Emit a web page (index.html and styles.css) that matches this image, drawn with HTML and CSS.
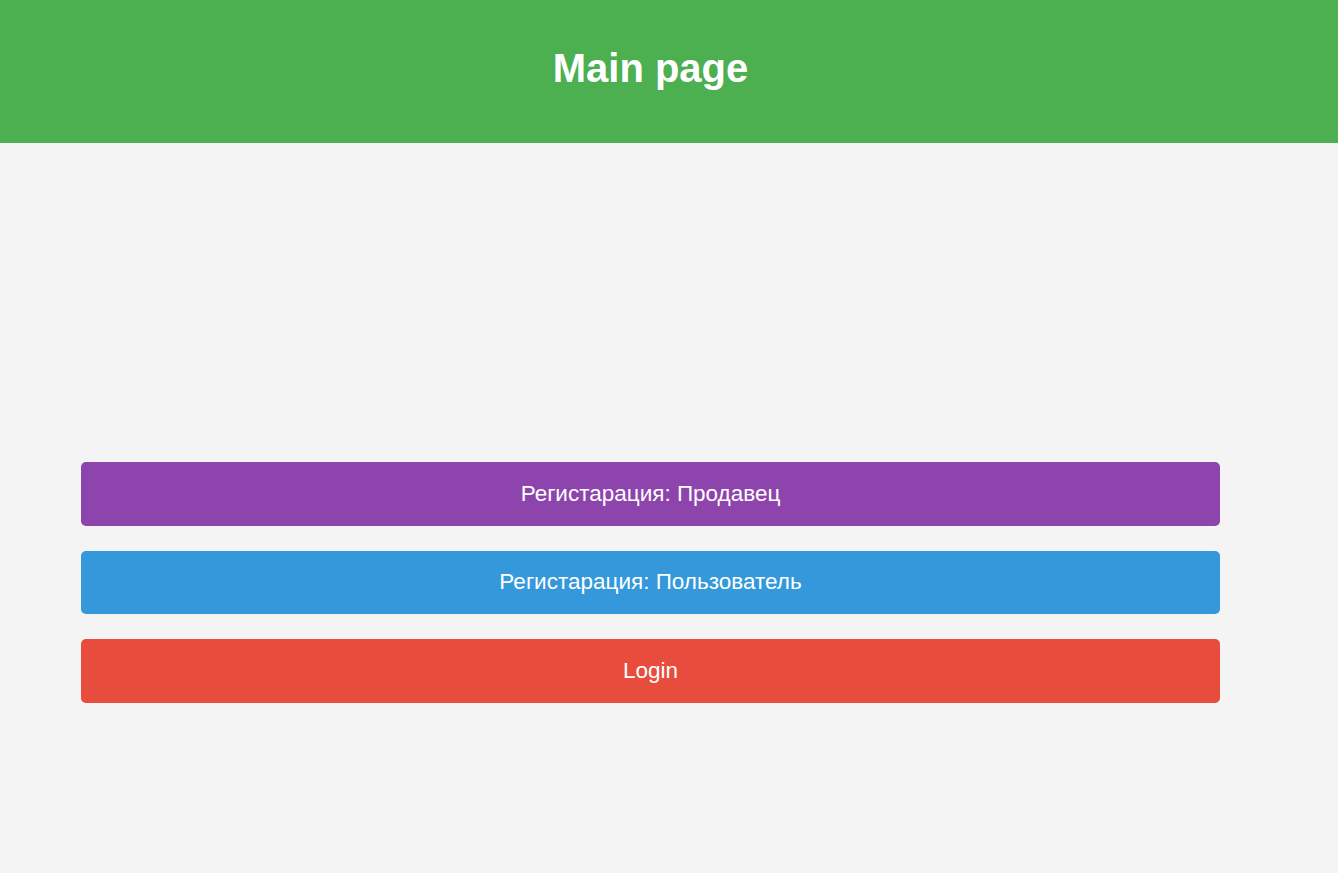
FILE: index.html
```html
<!DOCTYPE html>
<html lang="ru">
<head>
<meta charset="utf-8">
<title>Main page</title>
<link rel="stylesheet" href="styles.css">
</head>
<body>
<header class="header">
  <div class="header-inner">
    <h1 class="title">Main page</h1>
  </div>
</header>
<main class="main">
  <div class="actions">
    <a class="btn btn-seller" href="#">Регистарация: Продавец</a>
    <a class="btn btn-user" href="#">Регистарация: Пользователь</a>
    <a class="btn btn-login" href="#">Login</a>
  </div>
</main>
</body>
</html>
```
FILE: styles.css
```css
html, body {
  margin: 0;
  padding: 0;
}
body {
  background: #f4f4f4;
  font-family: "Liberation Sans", Arial, sans-serif;
  color: #fff;
  min-height: 873px;
}
.header {
  background: #4caf50;
  height: 143px;
  box-sizing: border-box;
  padding-top: 45px;
}
.header-inner {
  width: 1301px;
  text-align: center;
}
.title {
  margin: 0;
  font-size: 40px;
  line-height: 46px;
  font-weight: bold;
  color: #fff;
}
.main {
  padding-top: 319px;
}
.actions {
  width: 1301px;
  box-sizing: border-box;
  padding: 0 81px;
  display: flex;
  flex-direction: column;
  gap: 25px;
}
.btn {
  display: flex;
  align-items: center;
  justify-content: center;
  height: 63.5px;
  border-radius: 5px;
  color: #fff;
  text-decoration: none;
  font-size: 22.5px;
}
.btn-seller { background: #8e44ad; }
.btn-user { background: #3498db; }
.btn-login { background: #e74c3c; }
```
